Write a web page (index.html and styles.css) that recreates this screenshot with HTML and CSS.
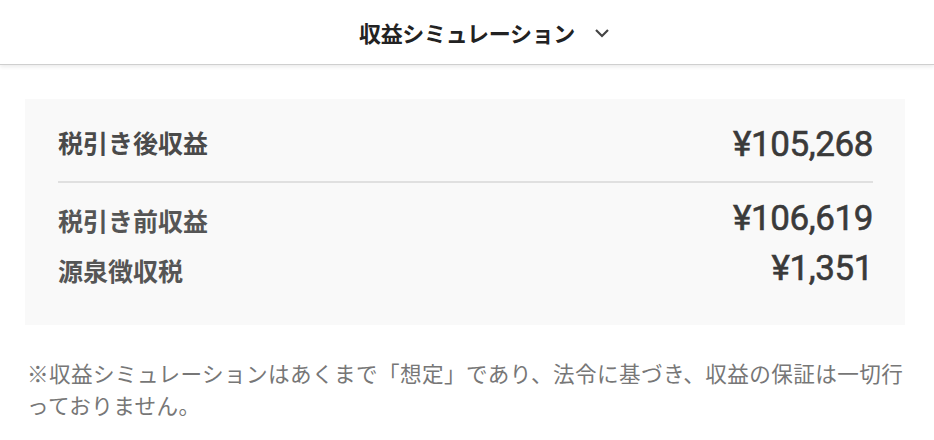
FILE: index.html
```html
<!DOCTYPE html>
<html lang="ja">
<head>
<meta charset="utf-8">
<link rel="stylesheet" href="styles.css">
</head>
<body>
<header class="header">
  <h1 class="title">収益シミュレーション</h1>
  <svg class="chevron" width="16" height="10" viewBox="0 0 16 10"><path d="M2 2 L8 8 L14 2" fill="none" stroke="#444" stroke-width="2.2"/></svg>
</header>
<main class="content">
  <section class="card">
    <div class="row row-main">
      <span class="label">税引き後収益</span>
      <span class="value">¥105,268</span>
    </div>
    <hr class="divider">
    <div class="row row-sub">
      <span class="label">税引き前収益</span>
      <span class="value">¥106,619</span>
    </div>
    <div class="row row-sub">
      <span class="label">源泉徴収税</span>
      <span class="value">¥1,351</span>
    </div>
  </section>
  <p class="note">※収益シミュレーションはあくまで「想定」であり、法令に基づき、収益の保証は一切行っておりません。</p>
</main>
</body>
</html>
```
FILE: styles.css
```css
* { box-sizing: border-box; }
html, body { margin: 0; padding: 0; background: #fff; }
body {
  font-family: "Noto Sans CJK JP", "Noto Sans", sans-serif;
  color: #444;
}
.header {
  height: 65px;
  display: grid;
  grid-template-columns: 1fr auto 1fr;
  align-items: center;
  border-bottom: 1px solid #cfcfcf;
  box-shadow: 0 2px 4px rgba(0,0,0,0.08);
}
.title {
  grid-column: 2;
  margin: 0;
  font-size: 22px;
  font-weight: 700;
  color: #222;
  letter-spacing: -0.3px;
}
.chevron {
  grid-column: 3;
  justify-self: start;
  margin-left: 19px;
  margin-top: 2px;
}
.content {
  padding: 34px 29px 0 25px;
}
.card {
  background: #f9f9f9;
  padding: 19px 32px 30px 33px;
}
.row {
  display: flex;
  justify-content: space-between;
  align-items: center;
}
.label {
  font-size: 25px;
  font-weight: 600;
  color: #4a4a4a;
}
.value {
  font-family: Roboto, "Noto Sans CJK JP", sans-serif;
  font-size: 35px;
  font-weight: 400;
  color: #3a3a3a;
  letter-spacing: -0.4px;
  -webkit-text-stroke: 0.6px #3a3a3a;
}
.row-main { height: 48px; }
.row-main .value { padding-top: 5px; }
.divider {
  border: 0;
  height: 2px;
  background: #e0e0e0;
  margin: 15px 0 12px 0;
}
.row-sub { height: 50px; }
.row-sub .label { color: #555; }
.row-sub .value { padding-bottom: 3px; }
.note {
  margin: 32px 0 0 2px;
  font-size: 21.6px;
  letter-spacing: 0.4px;
  line-height: 32px;
  line-break: loose;
  color: #777;
}
```
